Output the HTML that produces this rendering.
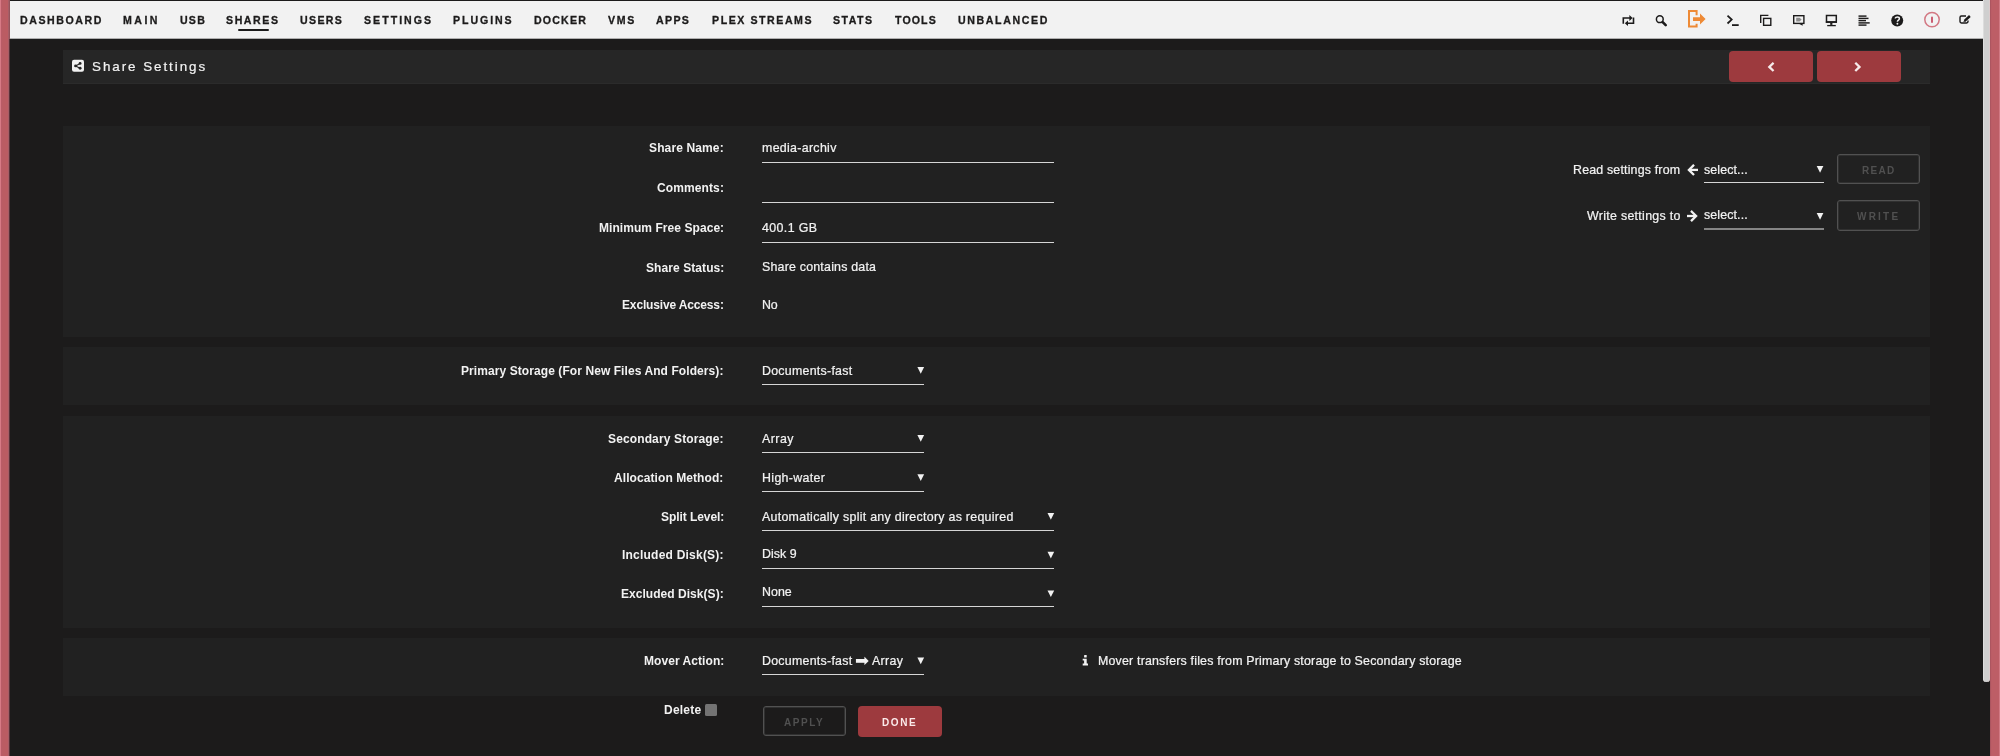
<!DOCTYPE html>
<html lang="en">
<head>
<meta charset="utf-8">
<title>media-archiv/Share</title>
<style>
html,body{margin:0;padding:0;width:2000px;height:756px;overflow:hidden;background:#1c1b1b;}
body{position:relative;font-family:"Liberation Sans",Arial,sans-serif;color:#f2f2f2;}
.abs,.t,.ln{position:absolute;}
.t{white-space:pre;line-height:1;will-change:transform;}
.nv{font-size:10.6px;font-weight:bold;color:#1c1b1b;-webkit-text-stroke:0.3px #1c1b1b;}
.ttl{font-size:13.4px;color:#f2f2f2;-webkit-text-stroke:0.2px #f2f2f2;}
.lb{font-size:12px;font-weight:bold;color:#f2f2f2;}
.vl{font-size:12.4px;color:#f2f2f2;-webkit-text-stroke:0.22px #f2f2f2;}
.bt{font-size:10px;font-weight:bold;}
.arw{font-family:"DejaVu Sans",sans-serif;font-size:16.8px;color:#f2f2f2;}
/* host frame strips */
#stripL{left:0;top:0;width:10px;height:756px;background:linear-gradient(90deg,#d87a85 0,#d87a85 0.9px,#b95c67 1.5px,#bb5c63 3px,#bb5c63 7.7px,#a65e67 8.3px,#a65e67 9px,#5e343b 9.3px,#4a2a30 10px);}
#stripL2{left:9px;top:0;width:1px;height:38.6px;background:#96545c;}
#stripR{left:1990px;top:0;width:10px;height:756px;background:linear-gradient(90deg,#ad5660 0,#ad5660 0.8px,#bd5e66 1.6px,#bd5e66 8.6px,#d17983 9.4px,#d17983 10px);}
#topline{left:10px;top:0;width:1973px;height:1px;background:#1c1b1b;}
#nav{left:10px;top:1px;width:1973px;height:37px;background:#f2f2f2;border-bottom:1px solid #b0afaf;}
#thumb{left:1982.7px;top:-8px;width:7.3px;height:689.5px;background:#cfcfcf;border-radius:3.8px;box-shadow:inset 1px 0 0 #dddddd,inset -1px 0 0 #dccccd;}
#under{left:237.5px;top:29px;width:31px;height:2px;background:#1c1b1b;border-radius:1px;}
#title{left:63px;top:49.5px;width:1866.5px;height:34.5px;background:#262626;border-bottom:1px solid #2b2b2b;box-sizing:border-box;}
.panel{left:63px;width:1866.5px;background:#212121;}
.ln{height:1px;background:#d6d6d6;}
.btn{box-sizing:border-box;border-radius:4px;}
.btn.red{background:#9d3a3e;}
.btn.dis{border:1px solid #515151;background:transparent;box-shadow:inset 0 0 0 1px #303030;border-radius:3px;}
#cb{left:705px;top:704px;width:12.4px;height:12.4px;background:#737373;border-radius:1.5px;}
svg{position:absolute;overflow:visible;}
</style>
</head>
<body>
<div id="stripL" class="abs"></div>
<div id="stripL2" class="abs"></div>
<div id="topline" class="abs"></div>
<div id="nav" class="abs"></div>
<div id="under" class="abs"></div>
<div id="thumb" class="abs"></div>
<div id="stripR" class="abs"></div>

<div id="title" class="abs"></div>
<div class="abs btn red" style="left:1729.3px;top:51px;width:83.9px;height:31px"></div>
<div class="abs btn red" style="left:1817.3px;top:51px;width:83.6px;height:31px"></div>

<div class="abs panel" style="top:126px;height:211px"></div>
<div class="abs panel" style="top:347px;height:58px"></div>
<div class="abs panel" style="top:416px;height:212px"></div>
<div class="abs panel" style="top:638px;height:58px"></div>

<!-- input / select underlines -->
<div class="ln" style="left:762px;top:162px;width:292.4px"></div>
<div class="ln" style="left:762px;top:202px;width:292.4px"></div>
<div class="ln" style="left:762px;top:242px;width:292.4px"></div>
<div class="ln" style="left:762px;top:384px;width:162.4px"></div>
<div class="ln" style="left:762px;top:452px;width:162.4px"></div>
<div class="ln" style="left:762px;top:491px;width:162.4px"></div>
<div class="ln" style="left:762px;top:530px;width:292.4px"></div>
<div class="ln" style="left:762px;top:568px;width:292.4px"></div>
<div class="ln" style="left:762px;top:606px;width:292.4px"></div>
<div class="ln" style="left:762px;top:674px;width:162.4px"></div>
<div class="ln" style="left:1704px;top:182px;width:120px"></div>
<div class="ln" style="left:1704px;top:228px;width:120px;height:2px;background:#858585"></div>


<!-- buttons -->
<div class="abs btn dis" style="left:1837px;top:154px;width:83px;height:30px"></div>
<div class="abs btn dis" style="left:1837px;top:200px;width:83px;height:31px"></div>
<div class="abs btn dis" style="left:763px;top:706px;width:83px;height:30px"></div>
<div class="abs btn red" style="left:857.8px;top:706px;width:83.9px;height:30.8px"></div>
<div id="cb" class="abs"></div>

<svg id="icons" width="2000" height="756" viewBox="0 0 2000 756" style="left:0;top:0;pointer-events:none">
  <!-- title: share-alt-square -->
  <g id="i-share">
    <rect x="72" y="59.8" width="12" height="12" rx="2" fill="#f2f2f2"/>
    <g fill="#262626" stroke="#262626">
      <circle cx="75.6" cy="65.9" r="1.45" stroke="none"/>
      <circle cx="80.1" cy="63.4" r="1.45" stroke="none"/>
      <circle cx="80.1" cy="68.3" r="1.45" stroke="none"/>
      <path d="M80.1 63.4 L75.6 65.9 L80.1 68.3" fill="none" stroke-width="1.15"/>
    </g>
  </g>
  <!-- prev / next chevrons -->
  <path d="M1772.7 63.6 L1769.3 66.9 L1772.7 70.2" fill="none" stroke="#f6eaea" stroke-width="2.3" stroke-linecap="square" stroke-linejoin="miter"/>
  <path d="M1856.1 63.6 L1859.5 66.9 L1856.1 70.2" fill="none" stroke="#f6eaea" stroke-width="2.3" stroke-linecap="square" stroke-linejoin="miter"/>

  <!-- nav icons -->
  <g id="i-switch" fill="none" stroke="#1c1b1b" stroke-width="1.6">
    <path d="M1623.3 23.8 V18 H1630"/>
    <path d="M1633.5 17.4 V23.2 H1627.4"/>
    <path d="M1629.4 14.9 L1632.6 17.9 L1629.4 20.9 Z" fill="#1c1b1b" stroke="none"/>
    <path d="M1628 20.4 L1624.8 23.2 L1628 26 Z" fill="#1c1b1b" stroke="none"/>
  </g>
  <g id="i-search" fill="none" stroke="#1c1b1b">
    <circle cx="1659.8" cy="19.2" r="3.4" stroke-width="1.5"/>
    <path d="M1662.7 22.1 L1665.7 25.1" stroke-width="2.6" stroke-linecap="round"/>
  </g>
  <g id="i-logout" fill="#ee8a35">
    <path d="M1688 10 H1697.6 V15.2 H1695.6 V12 H1690 V25.6 H1695.6 V23.8 H1697.6 V27.6 H1688 Z"/>
    <path d="M1693 17.2 H1700 V13.4 L1705.6 19 L1700 24.4 V20.9 H1693 Z"/>
  </g>
  <g id="i-terminal" fill="none" stroke="#1c1b1b">
    <path d="M1727.5 15.7 L1731.7 19.6 L1727.5 23.5" stroke-width="1.75" stroke-linecap="butt"/>
    <path d="M1732 25.1 H1738.7" stroke-width="1.8"/>
  </g>
  <g id="i-clone" fill="none" stroke="#1c1b1b" stroke-width="1.4">
    <path d="M1760.7 23 V15.4 H1768.4"/>
    <rect x="1763.6" y="18.4" width="7.2" height="6.9"/>
  </g>
  <g id="i-comment">
    <rect x="1793.7" y="15.7" width="10.2" height="7.7" fill="none" stroke="#1c1b1b" stroke-width="1.4"/>
    <path d="M1799.4 24 H1802.6 V25.8 Z" fill="#1c1b1b"/>
    <path d="M1796.2 17.8 H1799.6 L1801.6 19.6 L1799.6 21.4 H1796.2 Z" fill="#8c8c8c"/>
  </g>
  <g id="i-desktop" stroke="#1c1b1b" fill="none">
    <rect x="1826.5" y="15.5" width="9.8" height="6.4" stroke-width="1.5"/>
    <path d="M1825.8 22.2 H1837" stroke-width="1.4"/>
    <path d="M1831.3 22.6 V24.9" stroke-width="2.2"/>
    <path d="M1827.2 25.6 H1835.8" stroke-width="1.3"/>
  </g>
  <g id="i-log" stroke="#1c1b1b" stroke-width="1.45" fill="none">
    <path d="M1858.5 16.1 H1866.5"/>
    <path d="M1858.5 18.4 H1868.5"/>
    <path d="M1858.5 20.6 H1866"/>
    <path d="M1858.5 22.9 H1869.7"/>
    <path d="M1858.5 25.1 H1866.5"/>
  </g>
  <g id="i-help">
    <circle cx="1897.2" cy="20.4" r="6" fill="#1c1b1b"/>
    <path d="M1895.3 18.6 C1895.3 16.6 1899.4 16.6 1899.4 18.7 C1899.4 20.2 1897.4 20 1897.4 21.8" fill="none" stroke="#f2f2f2" stroke-width="1.5"/>
    <circle cx="1897.4" cy="23.7" r="0.95" fill="#f2f2f2"/>
  </g>
  <g id="i-power">
    <circle cx="1932" cy="19.6" r="7.2" fill="none" stroke="#d27883" stroke-width="1.5"/>
    <path d="M1932 17.4 V22.1" stroke="#c9566a" stroke-width="1.9" stroke-linecap="round"/>
  </g>
  <g id="i-edit" fill="none" stroke="#1c1b1b">
    <path d="M1966 16 H1961.4 Q1960 16 1960 17.4 V21.6 Q1960 23 1961.4 23 H1966.6 Q1968 23 1968 21.6 V20.4" stroke-width="1.4"/>
    <path d="M1964.6 20.9 L1969.9 16" stroke-width="2.4"/>
    <path d="M1963.2 22.3 L1964.4 19.9 L1965.8 21.3 Z" fill="#1c1b1b" stroke="none"/>
  </g>

  <!-- read / write arrows (fa-arrow-left / fa-arrow-right) -->
  <g fill="none" stroke="#f2f2f2" stroke-width="2.3" stroke-linecap="butt" stroke-linejoin="miter">
    <path d="M1698 169.9 H1689.6"/>
    <path d="M1693.2 165.6 L1688.9 169.9 L1693.2 174.2" stroke-linecap="square"/>
    <path d="M1687 216 H1695.4"/>
    <path d="M1691.8 211.7 L1696.1 216 L1691.8 220.3" stroke-linecap="square"/>
  </g>
  <!-- info -->
  <g fill="#f2f2f2">
    <rect x="1084.1" y="655" width="2.6" height="2.6" rx="0.6"/>
    <path d="M1082.7 658.8 H1086.7 V663.4 H1088 V665.4 H1082.7 V663.4 H1084.1 V660.4 H1082.7 Z"/>
  </g>
  <!-- select dropdown arrows -->
  <g fill="#f2f2f2">
    <path d="M917.4 367.0 h6.7 l-3.35 6.7 Z"/>
    <path d="M917.4 435.0 h6.7 l-3.35 6.7 Z"/>
    <path d="M917.4 474.2 h6.7 l-3.35 6.7 Z"/>
    <path d="M1047.5 513.0 h6.7 l-3.35 6.7 Z"/>
    <path d="M1047.5 551.7 h6.7 l-3.35 6.7 Z"/>
    <path d="M1047.5 590.4 h6.7 l-3.35 6.7 Z"/>
    <path d="M917.4 657.6 h6.7 l-3.35 6.7 Z"/>
    <path d="M1816.7 166.0 h6.7 l-3.35 6.7 Z"/>
    <path d="M1816.7 213.0 h6.7 l-3.35 6.7 Z"/>
  </g>
</svg>


<span class="t arw" style="left:855.3px;top:651.7px">➡</span>
<nav id="menu">
<span class="t nv" style="left:19.8px;top:15px;letter-spacing:1.56px">DASHBOARD</span>
<span class="t nv" style="left:122.9px;top:15px;letter-spacing:2.47px">MAIN</span>
<span class="t nv" style="left:179.6px;top:15px;letter-spacing:1.21px">USB</span>
<span class="t nv" style="left:226.2px;top:15px;letter-spacing:1.57px">SHARES</span>
<span class="t nv" style="left:300.2px;top:15px;letter-spacing:1.35px">USERS</span>
<span class="t nv" style="left:364.2px;top:15px;letter-spacing:2.02px">SETTINGS</span>
<span class="t nv" style="left:453.4px;top:15px;letter-spacing:1.93px">PLUGINS</span>
<span class="t nv" style="left:533.8px;top:15px;letter-spacing:1.18px">DOCKER</span>
<span class="t nv" style="left:608.0px;top:15px;letter-spacing:1.62px">VMS</span>
<span class="t nv" style="left:656.3px;top:15px;letter-spacing:1.35px">APPS</span>
<span class="t nv" style="left:711.7px;top:15px;letter-spacing:1.56px">PLEX STREAMS</span>
<span class="t nv" style="left:833.1px;top:15px;letter-spacing:1.49px">STATS</span>
<span class="t nv" style="left:894.7px;top:15px;letter-spacing:1.12px">TOOLS</span>
<span class="t nv" style="left:957.7px;top:15px;letter-spacing:1.63px">UNBALANCED</span>
</nav>
<main id="content">
<span class="t ttl" style="left:92.3px;top:60px;letter-spacing:1.95px">Share Settings</span>
<span class="t lb" style="left:649.1px;top:142px;letter-spacing:0.13px">Share Name:</span>
<span class="t lb" style="left:656.9px;top:182px;letter-spacing:0.11px">Comments:</span>
<span class="t lb" style="left:598.6px;top:222px;letter-spacing:0.06px">Minimum Free Space:</span>
<span class="t lb" style="left:645.5px;top:262px;letter-spacing:0.08px">Share Status:</span>
<span class="t lb" style="left:621.9px;top:299px;letter-spacing:-0.15px">Exclusive Access:</span>
<span class="t lb" style="left:461.4px;top:365px;letter-spacing:0.08px">Primary Storage (For New Files And Folders):</span>
<span class="t lb" style="left:608.3px;top:433px;letter-spacing:0.13px">Secondary Storage:</span>
<span class="t lb" style="left:614.4px;top:472px;letter-spacing:0.08px">Allocation Method:</span>
<span class="t lb" style="left:660.6px;top:511px;letter-spacing:-0.07px">Split Level:</span>
<span class="t lb" style="left:622.2px;top:549px;letter-spacing:0.22px">Included Disk(S):</span>
<span class="t lb" style="left:621.1px;top:588px;letter-spacing:0.04px">Excluded Disk(S):</span>
<span class="t lb" style="left:643.5px;top:655px;letter-spacing:0.06px">Mover Action:</span>
<span class="t lb" style="left:664.2px;top:704px;letter-spacing:0.21px">Delete</span>
<span class="t vl" style="left:761.5px;top:142px;letter-spacing:0.31px">media-archiv</span>
<span class="t vl" style="left:761.5px;top:222px;letter-spacing:0.38px">400.1 GB</span>
<span class="t vl" style="left:761.5px;top:261px;letter-spacing:0.21px">Share contains data</span>
<span class="t vl" style="left:761.8px;top:299px;letter-spacing:-0.14px">No</span>
<span class="t vl" style="left:761.8px;top:365px;letter-spacing:0.26px">Documents-fast</span>
<span class="t vl" style="left:761.5px;top:433px;letter-spacing:0.47px">Array</span>
<span class="t vl" style="left:761.8px;top:472px;letter-spacing:0.34px">High-water</span>
<span class="t vl" style="left:761.5px;top:511px;letter-spacing:0.28px">Automatically split any directory as required</span>
<span class="t vl" style="left:761.8px;top:548px;letter-spacing:0.05px">Disk 9</span>
<span class="t vl" style="left:761.8px;top:586px;letter-spacing:0.03px">None</span>
<span class="t vl" style="left:761.8px;top:655px;letter-spacing:0.26px">Documents-fast</span>
<span class="t vl" style="left:871.8px;top:655px;letter-spacing:0.32px">Array</span>
<span class="t vl" style="left:1097.7px;top:655px;letter-spacing:0.19px">Mover transfers files from Primary storage to Secondary storage</span>
<span class="t vl" style="left:1573.0px;top:164px;letter-spacing:0.18px">Read settings from</span>
<span class="t vl" style="left:1586.6px;top:210px;letter-spacing:0.3px">Write settings to</span>
<span class="t vl" style="left:1703.8px;top:164px;letter-spacing:0.12px">select...</span>
<span class="t vl" style="left:1703.8px;top:209px;letter-spacing:0.12px">select...</span>
<span class="t bt" style="left:784.1px;top:718px;letter-spacing:1.54px;color:#505050">APPLY</span>
<span class="t bt" style="left:882.1px;top:718px;letter-spacing:1.6px;color:#fbeaea">DONE</span>
<span class="t bt" style="left:1861.6px;top:166px;letter-spacing:1.32px;color:#505050">READ</span>
<span class="t bt" style="left:1856.9px;top:212px;letter-spacing:2.22px;color:#505050">WRITE</span>
</main>
</body>
</html>
